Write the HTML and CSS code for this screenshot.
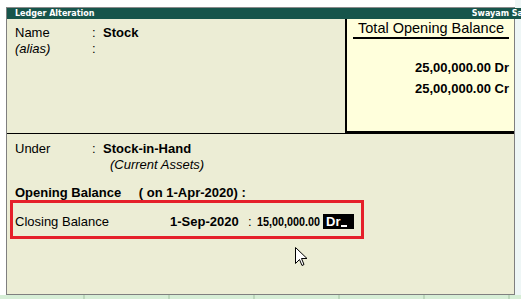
FILE: index.html
```html
<!DOCTYPE html>
<html>
<head>
<meta charset="utf-8">
<link rel="stylesheet" href="styles.css">
</head>
<body>
<div class="screen">
  <div class="window">
    <div class="titlebar">
      <span class="title">Ledger Alteration</span>
      <span class="company">Swayam Sa</span>
    </div>
    <div class="top">
      <div class="topleft">
        <div class="row"><span class="lbl">Name</span><span class="colon">:</span><span class="val b">Stock</span></div>
        <div class="row"><span class="lbl i">(alias)</span><span class="colon">:</span><span class="val"></span></div>
      </div>
      <div class="panel">
        <div class="panel-title">Total Opening Balance</div>
        <div class="amt">25,00,000.00 Dr</div>
        <div class="amt">25,00,000.00 Cr</div>
      </div>
    </div>
    <div class="bottom">
      <div class="row"><span class="lbl">Under</span><span class="colon">:</span><span class="val b">Stock-in-Hand</span></div>
      <div class="sub i">(Current Assets)</div>
      <div class="ob b">Opening Balance <span class="ob-on">( on 1-Apr-2020) :</span></div>
      <div class="hl">
        <span class="cl">Closing Balance</span>
        <span class="date b">1-Sep-2020</span>
        <span class="colon2">:</span>
        <span class="numbox"><span class="num b">15,00,000.00</span></span>
        <span class="drcr">Dr<span class="cursor"></span></span>
      </div>
      <div class="pointer">
        <svg width="13" height="21" viewBox="0 0 13 21"><path d="M0.5 0.5 L0.5 16.5 L4.5 12.5 L7 18.5 L9 17.5 L6.5 11.5 L12 11.5 Z" fill="#fff" stroke="#000" stroke-width="1" stroke-linejoin="round"/></svg>
      </div>
    </div>
  </div>
  <div class="statusbar"></div>
</div>
</body>
</html>
```
FILE: styles.css
```css
* { box-sizing: border-box; }
html, body { margin: 0; padding: 0; }
body {
  width: 521px; height: 299px; overflow: hidden;
  background: #ffffff;
  font-family: "Liberation Sans", Arial, sans-serif;
  color: #000;
}
.screen { position: relative; width: 521px; height: 299px; padding-top: 7px; background: linear-gradient(to right, #fff 0, #fff 515px, #eef6f6 515px); }
.window {
  margin-left: 6px;
  width: 509px;
  height: 288px;
  border: 1px solid #7f7f7f;
  border-top-color: #8a8a8a;
  background: #ecedd5;
  display: flex; flex-direction: column;
}
.titlebar {
  height: 11px;
  width: 514px;
  background: #17554b;
  color: #fff;
  font-family: "DejaVu Sans", Tahoma, sans-serif;
  font-weight: bold;
  font-size: 8px;
  line-height: 11px;
  display: flex; justify-content: space-between;
  padding-left: 8px;
  white-space: nowrap;
  overflow: hidden;
}
.company { margin-right: -2px; }
.top { display: flex; height: 115px; border-bottom: 1px solid #000; }
.topleft { width: 338px; padding: 6px 0 0 8px; }
.row { display: flex; font-size: 13px; line-height: 16px; }
.lbl { width: 77px; }
.colon { width: 11px; }
.b { font-weight: bold; }
.i { font-style: italic; }
.panel {
  flex: 1;
  background: #ffffdc;
  border-left: 2px solid #000;
  border-bottom: 3px solid #000;
  margin-bottom: -1px;
  padding: 1px 5px 0 6px;
}
.panel-title {
  font-size: 14.5px; line-height: 17px;
  text-align: center;
  border-bottom: 2px solid #000;
  margin-bottom: 18px;
}
.amt { font-size: 13px; font-weight: bold; text-align: right; line-height: 21px; }
.bottom { position: relative; flex: 1; padding: 7px 0 0 8px; }
.sub { font-size: 13px; line-height: 16px; padding-left: 95px; }
.ob { font-size: 13px; line-height: 16px; margin-top: 12px; }
.ob-on { margin-left: 14px; }
.hl {
  margin-top: -1px;
  margin-left: -5px;
  width: 354px; height: 39px;
  border: 3px solid #e5202a;
  display: flex; align-items: center;
  font-size: 13px;
  padding: 4px 0 0 2px;
}
.cl { width: 155px; }
.date { width: 78px; }
.colon2 { width: 9px; }
.numbox { width: 66px; overflow: visible; white-space: nowrap; }
.num { display: inline-block; font-size: 13px; transform: scaleX(0.83); transform-origin: left center; }
.drcr { background: #000; color: #fff; font-weight: bold; padding: 0 7px 0 3px; line-height: 15px; height: 15px; position: relative; }
.cursor { display: inline-block; width: 6px; height: 2px; background: #fff; margin-left: 1px; vertical-align: -1px; }
.pointer { position: absolute; left: 288px; top: 113px; }
.statusbar {
  height: 4px;
  background: #d6eed6;
  background-image: repeating-linear-gradient(to right, transparent 0, transparent 83px, #bcd8bc 83px, #bcd8bc 85px);
}
```
